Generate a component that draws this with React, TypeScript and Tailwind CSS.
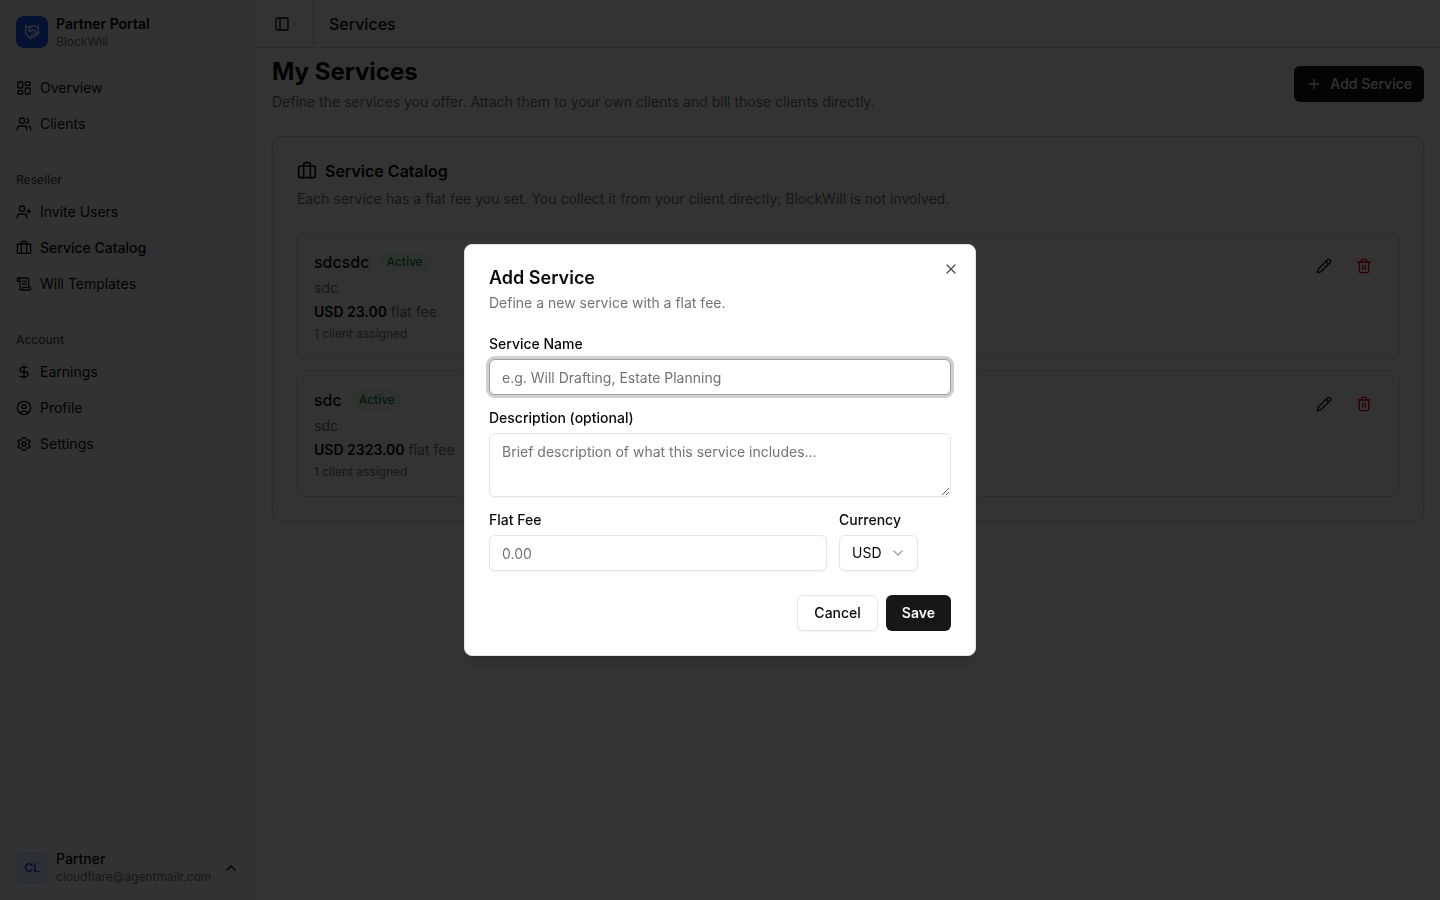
import React from "react";
import {
  Briefcase, ChevronDown, ChevronUp, CircleUser, DollarSign, Handshake, LayoutDashboard,
  PanelLeft, Pencil, Plus, ScrollText, Settings, Trash2, UserPlus, Users, X,
} from "lucide-react";
import type { LucideIcon } from "lucide-react";

type NavItem = { label: string; icon: LucideIcon; active?: boolean };
type NavGroup = { title?: string; items: NavItem[] };
type Service = { name: string; description: string; price: string; clients: string };

const groups: NavGroup[] = [
  { items: [{ label: "Overview", icon: LayoutDashboard }, { label: "Clients", icon: Users }] },
  {
    title: "Reseller",
    items: [
      { label: "Invite Users", icon: UserPlus },
      { label: "Service Catalog", icon: Briefcase, active: true },
      { label: "Will Templates", icon: ScrollText },
    ],
  },
  {
    title: "Account",
    items: [
      { label: "Earnings", icon: DollarSign },
      { label: "Profile", icon: CircleUser },
      { label: "Settings", icon: Settings },
    ],
  },
];

const services: Service[] = [
  { name: "sdcsdc", description: "sdc", price: "USD 23.00", clients: "1 client assigned" },
  { name: "sdc", description: "sdc", price: "USD 2323.00", clients: "1 client assigned" },
];

function Sidebar() {
  return (
    <aside className="flex w-64 shrink-0 flex-col border-r border-neutral-200 bg-neutral-50">
      <div className="p-2">
        <a href="#" className="flex h-12 items-center gap-2 rounded-md px-2">
          <span className="flex size-8 items-center justify-center rounded-lg bg-blue-600 text-white">
            <Handshake className="size-4" />
          </span>
          <span className="flex flex-col">
            <span className="text-sm/5 font-semibold">Partner Portal</span>
            <span className="text-xs/4 text-neutral-500">BlockWill</span>
          </span>
        </a>
      </div>
      <nav className="flex flex-1 flex-col gap-2">
        {groups.map((group, i) => (
          <div key={i} className="p-2">
            {group.title && (
              <h2 className="flex h-8 items-center px-2 text-xs font-medium text-neutral-600">{group.title}</h2>
            )}
            <ul className="flex flex-col gap-1">
              {group.items.map(({ label, icon: Icon, active }) => (
                <li key={label}>
                  <a
                    href="#"
                    className={`flex h-8 items-center gap-2 rounded-md px-2 text-sm ${active ? "bg-neutral-100 font-medium" : ""}`}
                  >
                    <Icon className="size-4" />
                    {label}
                  </a>
                </li>
              ))}
            </ul>
          </div>
        ))}
      </nav>
      <div className="p-2">
        <button className="flex h-12 w-full items-center gap-2 rounded-md px-2 text-left">
          <span className="flex size-8 items-center justify-center rounded-lg bg-blue-100 text-xs font-semibold text-blue-700">
            CL
          </span>
          <span className="flex flex-1 flex-col">
            <span className="text-sm/[18px] font-medium">Partner</span>
            <span className="text-xs/[18px] text-neutral-500">cloudflare@agentmailr.com</span>
          </span>
          <ChevronUp className="size-4" />
        </button>
      </div>
    </aside>
  );
}

function ServiceRow({ service }: { service: Service }) {
  return (
    <li className="flex items-start justify-between rounded-lg border border-neutral-200 p-4">
      <div className="flex flex-col gap-1">
        <div className="flex items-center gap-2">
          <h3 className="text-base font-medium">{service.name}</h3>
          <span className="rounded-full border border-transparent bg-green-50 px-2 py-px text-xs font-medium text-green-700">
            Active
          </span>
        </div>
        <p className="text-sm text-neutral-500">{service.description}</p>
        <p className="text-sm text-neutral-500">
          <span className="font-semibold text-neutral-950">{service.price}</span> flat fee
        </p>
        <p className="text-xs text-neutral-500">{service.clients}</p>
      </div>
      <div className="flex gap-1">
        <button aria-label="Edit service" className="flex h-8 items-center rounded-md px-2.5">
          <Pencil className="size-4" />
        </button>
        <button aria-label="Delete service" className="flex h-8 items-center rounded-md px-2.5 text-red-600">
          <Trash2 className="size-4" />
        </button>
      </div>
    </li>
  );
}

function AddServiceDialog() {
  const field =
    "w-full rounded-md border border-neutral-200 bg-white px-3 text-sm shadow-xs outline-none placeholder:text-neutral-500";
  return (
    <div className="fixed inset-0 flex items-center justify-center bg-black/80">
      <div
        role="dialog"
        aria-modal="true"
        aria-labelledby="dialog-title"
        className="relative flex w-full max-w-lg flex-col gap-4 rounded-lg border border-neutral-200 bg-white p-6 shadow-lg"
      >
        <header className="flex flex-col gap-1.5">
          <h2 id="dialog-title" className="text-lg leading-none font-semibold">Add Service</h2>
          <p className="text-sm text-neutral-500">Define a new service with a flat fee.</p>
        </header>
        <form className="flex flex-col gap-4 py-2">
          <div className="flex flex-col gap-2">
            <label htmlFor="name" className="text-sm leading-none font-medium">Service Name</label>
            <input
              id="name"
              placeholder="e.g. Will Drafting, Estate Planning"
              className="h-9 w-full rounded-md border border-neutral-400 bg-white px-3 text-sm shadow-xs ring-3 ring-[#cfcfcf] outline-none placeholder:text-neutral-500"
            />
          </div>
          <div className="flex flex-col gap-2">
            <label htmlFor="description" className="text-sm leading-none font-medium">Description (optional)</label>
            <textarea
              id="description"
              placeholder="Brief description of what this service includes..."
              className={`block h-16 py-2 ${field}`}
            />
          </div>
          <div className="flex gap-3">
            <div className="flex flex-1 flex-col gap-2">
              <label htmlFor="fee" className="text-sm leading-none font-medium">Flat Fee</label>
              <input id="fee" placeholder="0.00" className={`h-9 ${field}`} />
            </div>
            <div className="flex w-28 flex-col items-start gap-2">
              <label htmlFor="currency" className="text-sm leading-none font-medium">Currency</label>
              <div className="relative">
                <select
                  id="currency"
                  className="h-9 w-[79px] appearance-none rounded-md border border-neutral-200 bg-white px-3 text-sm shadow-xs outline-none"
                >
                  <option>USD</option>
                </select>
                <ChevronDown className="pointer-events-none absolute top-2.5 right-3 size-4 text-neutral-400" />
              </div>
            </div>
          </div>
        </form>
        <footer className="flex justify-end gap-2">
          <button className="h-9 rounded-md border border-neutral-200 bg-white px-4 text-sm font-medium shadow-xs">
            Cancel
          </button>
          <button className="h-9 rounded-md bg-neutral-900 px-4 text-sm font-semibold text-neutral-50">Save</button>
        </footer>
        <button aria-label="Close" className="absolute top-4 right-4 opacity-70">
          <X className="size-4" />
        </button>
      </div>
    </div>
  );
}

export default function App() {
  return (
    <div className="flex min-h-screen bg-white font-['Inter',sans-serif] text-neutral-950">
      <Sidebar />
      <main className="flex min-w-0 flex-1 flex-col">
        <header className="flex h-12 items-center border-b border-neutral-200 px-3">
          <button aria-label="Toggle sidebar" className="flex size-7 items-center justify-center">
            <PanelLeft className="size-4" />
          </button>
          <div className="ml-4 h-full border-l border-neutral-200" />
          <span className="ml-4 text-base font-medium">Services</span>
        </header>
        <div className="flex flex-col gap-6 px-4 pt-2">
          <div className="flex items-center justify-between">
            <div className="flex flex-col gap-1">
              <h1 className="text-2xl font-bold">My Services</h1>
              <p className="text-sm text-neutral-500">
                Define the services you offer. Attach them to your own clients and bill those clients directly.
              </p>
            </div>
            <button className="flex h-9 items-center gap-2 rounded-md bg-neutral-900 px-3 text-sm font-medium text-neutral-50">
              <Plus className="size-4" />
              Add Service
            </button>
          </div>
          <section className="flex flex-col gap-6 rounded-xl border border-neutral-200 bg-white p-6 shadow-sm">
            <div className="flex flex-col gap-2">
              <h2 className="flex items-center gap-2 text-base leading-none font-semibold">
                <Briefcase className="size-5" />
                Service Catalog
              </h2>
              <p className="text-sm text-neutral-500">
                Each service has a flat fee you set. You collect it from your client directly; BlockWill is not involved.
              </p>
            </div>
            <ul className="flex flex-col gap-3">
              {services.map((service) => (
                <ServiceRow key={service.name} service={service} />
              ))}
            </ul>
          </section>
        </div>
      </main>
      <AddServiceDialog />
    </div>
  );
}
